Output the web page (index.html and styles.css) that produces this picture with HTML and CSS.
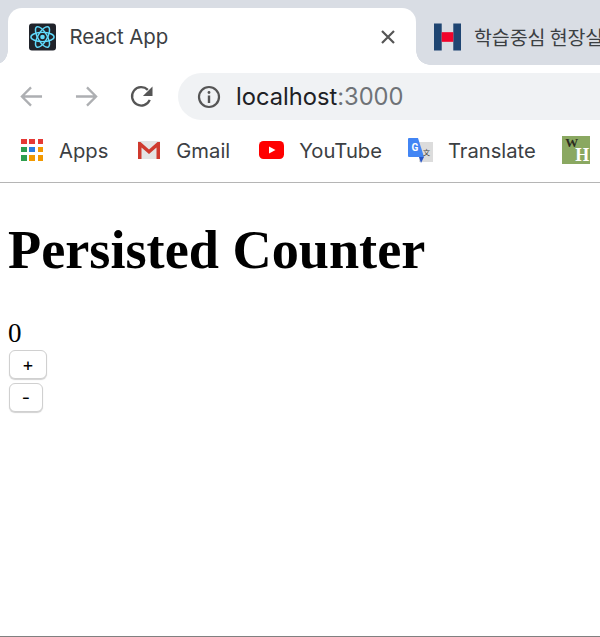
FILE: index.html
```html
<!DOCTYPE html>
<html lang="en">
<head>
<meta charset="utf-8">
<title>React App</title>
<link rel="stylesheet" href="styles.css">
</head>
<body>
<div class="window">
  <header class="chrome">
    <div class="tabstrip">
      <div class="tab active">
        <svg class="favicon" viewBox="0 0 28 28">
          <rect width="28" height="28" rx="3" fill="#20232a"/>
          <g fill="none" stroke="#61dafb" stroke-width="1.5">
            <ellipse cx="14" cy="14" rx="12" ry="4.8"/>
            <ellipse cx="14" cy="14" rx="12" ry="4.8" transform="rotate(60 14 14)"/>
            <ellipse cx="14" cy="14" rx="12" ry="4.8" transform="rotate(120 14 14)"/>
          </g>
          <circle cx="14" cy="14" r="2.4" fill="#61dafb"/>
        </svg>
        <span class="tab-title">React App</span>
        <svg class="close" viewBox="0 0 16 16"><path d="M2 2 L14 14 M14 2 L2 14" stroke="#555" stroke-width="2.2" fill="none"/></svg>
      </div>
      <div class="tab inactive">
        <svg class="favicon" viewBox="0 0 28 28">
          <rect x="0" y="0" width="8" height="28" fill="#1f4572"/>
          <rect x="20" y="0" width="8" height="28" fill="#1f4572"/>
          <rect x="8" y="9" width="12" height="10" fill="#f0042c"/>
        </svg>
        <span class="tab-title ko">학습중심 현장실</span>
      </div>
    </div>
    <div class="toolbar">
      <svg class="nav" viewBox="0 0 24 24"><path d="M23 12 H2 M11.5 2.5 L2 12 L11.5 21.5" stroke="#adafb2" stroke-width="2.4" fill="none"/></svg>
      <svg class="nav" viewBox="0 0 24 24"><path d="M1 12 H22 M12.5 2.5 L22 12 L12.5 21.5" stroke="#adafb2" stroke-width="2.4" fill="none"/></svg>
      <svg class="nav" viewBox="0 0 24 24"><path d="M20.6 15.5 A9.6 9.6 0 1 1 18.6 5.1" stroke="#555" stroke-width="2.4" fill="none"/><path d="M23.5 1.5 V11.5 H13.5 Z" fill="#555"/></svg>
      <div class="omnibox">
        <svg class="info" viewBox="0 0 24 24">
          <circle cx="12" cy="12" r="10" stroke="#555" stroke-width="2.2" fill="none"/>
          <circle cx="12" cy="7.5" r="1.4" fill="#555"/>
          <rect x="10.8" y="10.5" width="2.4" height="7.5" fill="#555"/>
        </svg>
        <span class="url">localhost<span class="port">:3000</span></span>
      </div>
    </div>
    <nav class="bookmarks">
      <div class="bookmark wide">
        <div class="apps">
          <i class="r"></i><i class="r"></i><i class="r"></i>
          <i class="g"></i><i class="b"></i><i class="y"></i>
          <i class="g"></i><i class="y"></i><i class="y"></i>
        </div>
        <span>Apps</span>
      </div>
      <div class="bookmark wide">
        <svg class="bm-icon gmail" viewBox="0 0 24 20">
          <rect x="1" y="1" width="22" height="18" fill="#e4e4e4"/>
          <path d="M1 19 V2 H3.5 L12 9.5 L20.5 2 H23 V19 H19.5 V7.5 L12 14 L4.5 7.5 V19 Z" fill="#cf3a2e"/>
        </svg>
        <span>Gmail</span>
      </div>
      <div class="bookmark yt-item">
        <svg class="bm-icon yt" viewBox="0 0 25 18">
          <rect width="25" height="18" rx="4.5" fill="#f00"/>
          <path d="M10 5.5 L16.5 9 L10 12.5 Z" fill="#fff"/>
        </svg>
        <span>YouTube</span>
      </div>
      <div class="bookmark gt-item">
        <svg class="bm-icon gt" viewBox="0 0 26 27">
          <path d="M12 5 H26 V25 H12 Z" fill="#dcdcdc"/>
          <path d="M1 2 Q1 1 2 1 H11 L17 20 H2 Q1 20 1 19 Z" fill="#4285f4"/>
          <path d="M12 20 H17 L14 26 Z" fill="#2a56c6"/>
          <text x="4.5" y="14" class="gt-g">G</text>
          <text x="16" y="18" class="gt-x">文</text>
        </svg>
        <span>Translate</span>
      </div>
      <div class="wh">
        <span class="wh-w">W</span>
        <span class="wh-h">H</span>
      </div>
    </nav>
  </header>
  <main class="page">
    <h1>Persisted Counter</h1>
    <div class="count">0</div>
    <div class="buttons">
      <button class="btn plus">+</button>
      <button class="btn minus">-</button>
    </div>
  </main>
</div>
</body>
</html>
```
FILE: styles.css
```css
* { box-sizing: border-box; }
html, body { margin: 0; height: 100%; overflow: hidden; }
body { background: #fff; }

.window {
  width: 600px;
  height: 637px;
  display: flex;
  flex-direction: column;
  border-bottom: 1px solid #808080;
  overflow: hidden;
}

.chrome {
  flex: none;
  font-family: Inter, "Noto Sans CJK KR", sans-serif;
  color: #3c4043;
}

.tabstrip {
  height: 65px;
  background: #d9dde4;
  padding: 8px 0 0 8px;
  display: flex;
  overflow: hidden;
}

.tab {
  height: 57px;
  display: flex;
  align-items: center;
  flex: none;
}
.tab.active {
  position: relative;
  width: 408px;
  background: #fff;
  border-radius: 14px 14px 0 0;
  padding: 0 20px 0 21px;
}
.tab.active::before,
.tab.active::after {
  content: "";
  position: absolute;
  bottom: 0;
  width: 14px;
  height: 14px;
}
.tab.active::before {
  left: -14px;
  background: radial-gradient(circle at 0 0, #d9dde4 13.5px, #fff 14px);
}
.tab.active::after {
  right: -14px;
  background: radial-gradient(circle at 100% 0, #d9dde4 13.5px, #fff 14px);
}
.tab.inactive {
  padding: 0 0 0 18px;
  white-space: nowrap;
}
.favicon { width: 27px; height: 28px; flex: none; }
.tab-title { margin-left: 13.5px; font-size: 20.4px; letter-spacing: -0.1px; }
.tab.active .tab-title { flex: 1; }
.ko { font-family: "Noto Sans CJK KR", sans-serif; font-size: 19.5px; margin-left: 13px; }
.close { width: 16px; height: 16px; }

.toolbar {
  height: 60px;
  display: flex;
  align-items: center;
  padding: 3px 0 0 20px;
}
.nav { width: 23px; height: 23px; flex: none; margin-right: 32px; }
.nav:nth-child(3) { margin-right: 25px; }
.omnibox {
  flex: 1;
  height: 47px;
  margin-right: -30px;
  background: #f0f2f4;
  border-radius: 24px;
  display: flex;
  align-items: center;
  padding-left: 19px;
}
.info { width: 24px; height: 24px; flex: none; }
.url { margin-left: 15px; font-size: 23.7px; color: #202124; }
.port { color: #6f7377; }

.bookmarks {
  height: 58px;
  border-bottom: 1px solid #b5b5b5;
  display: flex;
  align-items: center;
  padding: 0 0 7px 21px;
  font-size: 20.2px;
  white-space: nowrap;
}
.bookmark { display: flex; align-items: center; flex: none; }
.bookmark.wide { margin-right: 29px; }
.bookmark.yt-item { margin-right: 25px; }
.bookmark.gt-item { margin-right: 26.5px; }
.bookmark span { margin-left: 15px; }

.apps {
  width: 23px;
  height: 23px;
  display: grid;
  grid-template-columns: repeat(3, 5.6px);
  grid-auto-rows: 5.6px;
  gap: 2.8px;
}
.apps i { display: block; }
.apps .r { background: #e53935; }
.apps .g { background: #2e9e4f; }
.apps .b { background: #2a7de1; }
.apps .y { background: #f29900; }

.bm-icon { flex: none; }
.gmail { width: 24px; height: 20px; }
.yt { width: 25px; height: 18px; }
.gt { width: 26px; height: 27px; }
.gt-g { font: bold 10px Roboto, sans-serif; fill: #fff; }
.gt-x { font: 7px "Noto Sans CJK SC", sans-serif; fill: #444; }

.wh {
  width: 28px;
  height: 28px;
  flex: none;
  background: #8aa861;
  font-family: "Liberation Serif", serif;
  font-weight: bold;
  position: relative;
}
.wh-w { position: absolute; left: 3px; top: 2px; font-size: 13px; line-height: 9px; color: #2c2c20; }
.wh-h { position: absolute; left: 13px; top: 13px; font-size: 18px; line-height: 13px; color: #fff; }

.page {
  flex: 1;
  padding: 0 8px;
  background: #fff;
  font-family: "Liberation Serif", serif;
  color: #000;
}
h1 {
  margin: 36px 0 37px;
  font-size: 54.25px;
  line-height: 62px;
  font-weight: bold;
}
.count { font-size: 27px; line-height: 31px; }
.buttons { display: flex; flex-direction: column; align-items: flex-start; gap: 4px; padding: 1px 0 0 1px; }
.btn {
  height: 29px;
  padding: 0;
  background: #fff;
  border: 1.5px solid #d0d0d0;
  border-radius: 6px;
  box-shadow: 0 1px 1px rgba(0, 0, 0, 0.18);
  font-family: Inter, sans-serif;
  font-size: 18px;
  color: #000;
}
.plus { width: 38px; }
.minus { width: 34px; }
```
